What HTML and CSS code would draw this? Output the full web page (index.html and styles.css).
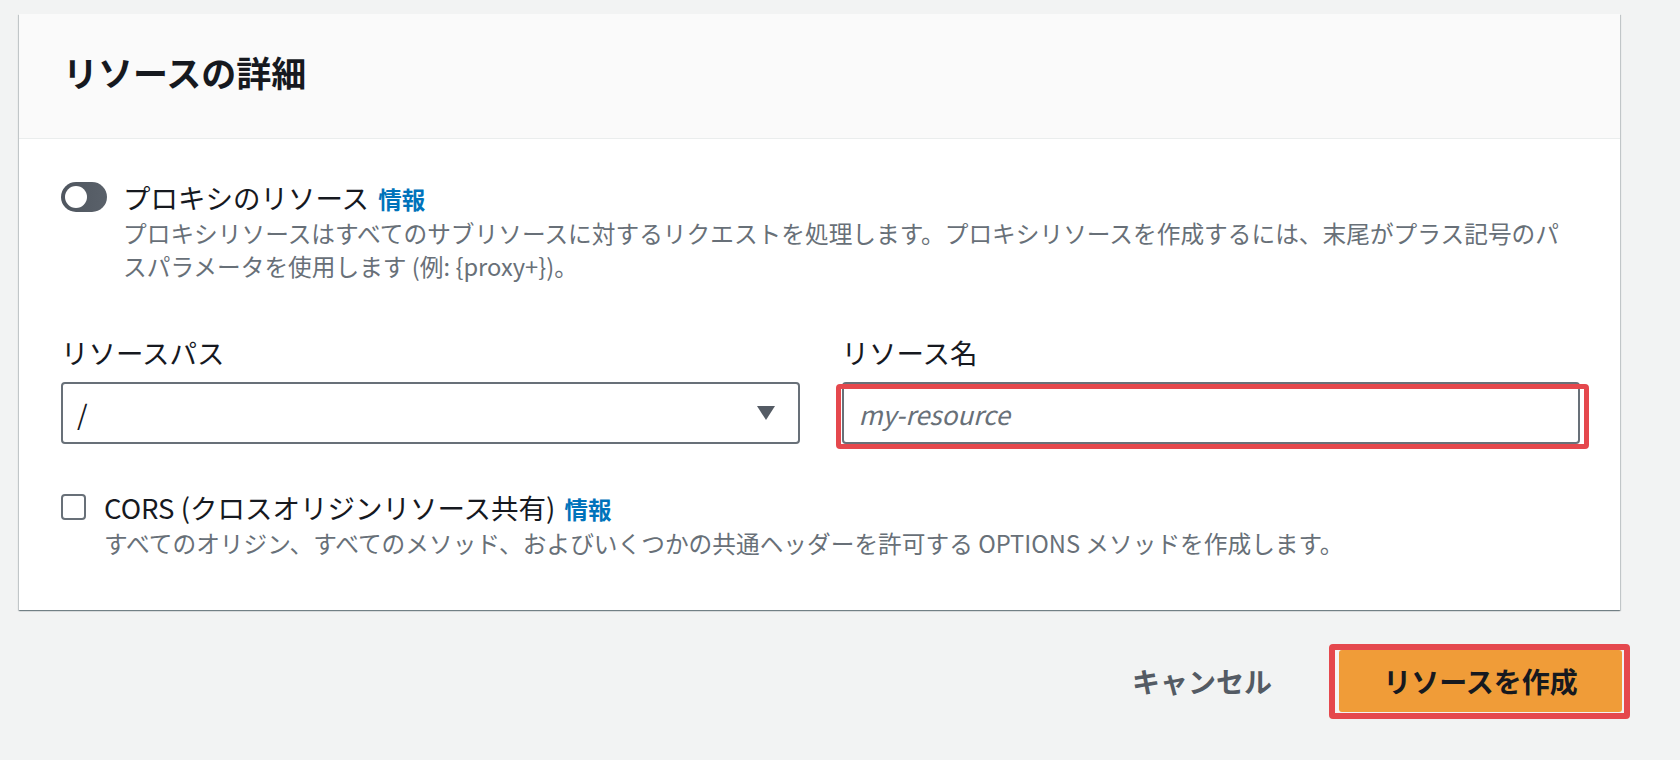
FILE: index.html
```html
<!DOCTYPE html>
<html lang="ja">
<head>
<meta charset="utf-8">
<title>リソースの詳細</title>
<link rel="stylesheet" href="styles.css">
</head>
<body>
<div class="page">
  <section class="card">
    <header class="card-header">
      <h2 class="card-title">リソースの詳細</h2>
    </header>
    <div class="card-body">
      <div class="toggle-field">
        <span class="toggle"><span class="knob"></span></span>
        <div class="field-text">
          <div class="field-label">プロキシのリソース <a class="info" href="#">情報</a></div>
          <p class="field-desc">プロキシリソースはすべてのサブリソースに対するリクエストを処理します。プロキシリソースを作成するには、末尾がプラス記号のパスパラメータを使用します (例: {proxy+})。</p>
        </div>
      </div>

      <div class="form-grid">
        <div class="form-field">
          <label class="label">リソースパス</label>
          <div class="select">
            <span class="select-value">/</span>
            <svg class="caret" width="20" height="16" viewBox="0 0 20 16"><path d="M1 1 H19 L10 15 Z" fill="#545b64"/></svg>
          </div>
        </div>
        <div class="form-field">
          <label class="label">リソース名</label>
          <div class="highlight highlight-input">
            <input class="text-input" type="text" placeholder="my-resource">
          </div>
        </div>
      </div>

      <div class="check-field">
        <span class="checkbox"></span>
        <div class="field-text">
          <div class="field-label">CORS (クロスオリジンリソース共有) <a class="info" href="#">情報</a></div>
          <p class="field-desc">すべてのオリジン、すべてのメソッド、およびいくつかの共通ヘッダーを許可する OPTIONS メソッドを作成します。</p>
        </div>
      </div>
    </div>
  </section>

  <div class="actions">
    <button class="btn-link" type="button">キャンセル</button>
    <div class="highlight highlight-button">
      <button class="btn-primary" type="button">リソースを作成</button>
    </div>
  </div>
</div>
</body>
</html>
```

FILE: styles.css
```css
* { box-sizing: border-box; }

html, body {
  margin: 0;
  padding: 0;
  background: #f2f3f3;
  font-family: "Noto Sans CJK JP", "Noto Sans", sans-serif;
  color: #16191f;
}

.page {
  width: 1680px;
  height: 760px;
  padding: 14px 60px 0 19px;
  overflow: hidden;
}

.card {
  background: #fff;
  box-shadow: 0 1px 1px 0 rgba(0, 28, 36, 0.35), 1px 1px 1px 0 rgba(0, 28, 36, 0.15), -1px 1px 1px 0 rgba(0, 28, 36, 0.15);
}

.card-header {
  height: 125px;
  background: #fafafa;
  border-bottom: 1px solid #eaeded;
  display: flex;
  align-items: center;
  padding: 0 44px;
}

.card-title {
  margin: 0;
  font-size: 35px;
  font-weight: 700;
  line-height: 40px;
  padding-bottom: 8px;
  color: #16191f;
}

.card-body {
  padding: 40px 40px 50px 42px;
}

.toggle-field, .check-field {
  display: flex;
  align-items: flex-start;
}

.toggle {
  flex: none;
  width: 46px;
  height: 30px;
  border-radius: 15px;
  background: linear-gradient(90deg, #4f565f, #5a616a);
  margin-top: 3px;
  margin-right: 16px;
  position: relative;
}

.knob {
  position: absolute;
  left: 4px;
  top: 4px;
  width: 22px;
  height: 22px;
  border-radius: 50%;
  background: #fff;
}

.field-text { flex: 1; min-width: 0; }

.field-label {
  font-size: 27.5px;
  line-height: 36px;
  color: #16191f;
}

.info {
  font-size: 23.5px;
  font-weight: 700;
  color: #0073bb;
  text-decoration: none;
  margin-left: 3px;
}

.field-desc {
  margin: 0;
  font-size: 23.7px;
  line-height: 33px;
  color: #687078;
}

.form-grid {
  display: grid;
  grid-template-columns: 1fr 1fr;
  column-gap: 42px;
  margin-top: 51px;
}

.form-field { display: flex; flex-direction: column; }

.label {
  font-size: 27.5px;
  line-height: 36px;
  margin-bottom: 12px;
  color: #16191f;
}

.select {
  height: 62px;
  border: 2px solid #687078;
  border-radius: 4px;
  display: flex;
  align-items: center;
  justify-content: space-between;
  padding: 0 22px 0 14px;
  background: #fff;
}

.select-value {
  font-size: 27px;
  color: #16191f;
}

.caret { display: block; }

.text-input {
  display: block;
  width: 100%;
  height: 62px;
  border: 2px solid #687078;
  border-radius: 4px;
  padding: 0 15px;
  font-family: "Noto Sans CJK JP", "Noto Sans", sans-serif;
  font-size: 26px;
  background: #fff;
  outline: none;
}

.text-input::placeholder {
  color: #687078;
  font-style: italic;
}

.highlight { position: relative; }

.highlight::after {
  content: "";
  position: absolute;
  border: 6px solid #e5484d;
  border-radius: 4px;
  pointer-events: none;
}

.highlight-input::after {
  top: 2px;
  right: -9px;
  bottom: -5px;
  left: -6px;
  border-width: 5px;
}

.check-field {
  margin-top: 45px;
}

.checkbox {
  flex: none;
  width: 25px;
  height: 26px;
  border: 2px solid #687078;
  border-radius: 4px;
  margin-top: 5px;
  margin-right: 18px;
  background: #fff;
}

.actions {
  display: flex;
  justify-content: flex-end;
  align-items: center;
  padding-top: 40px;
  margin-right: -2px;
}

.btn-link {
  background: none;
  border: none;
  font-family: "Noto Sans CJK JP", "Noto Sans", sans-serif;
  font-size: 28px;
  font-weight: 700;
  color: #545b64;
  padding: 0;
  margin-right: 67px;
  line-height: 36px;
}

.btn-primary {
  display: block;
  width: 283px;
  height: 62px;
  background: #f09c38;
  border: none;
  border-radius: 3px;
  font-family: "Noto Sans CJK JP", "Noto Sans", sans-serif;
  font-size: 28px;
  font-weight: 700;
  color: #16191f;
  box-shadow: -4px 0 0 0 #f5f5f5;
}

.highlight-button::after {
  top: -6px;
  right: -8px;
  bottom: -7px;
  left: -10px;
}
```
